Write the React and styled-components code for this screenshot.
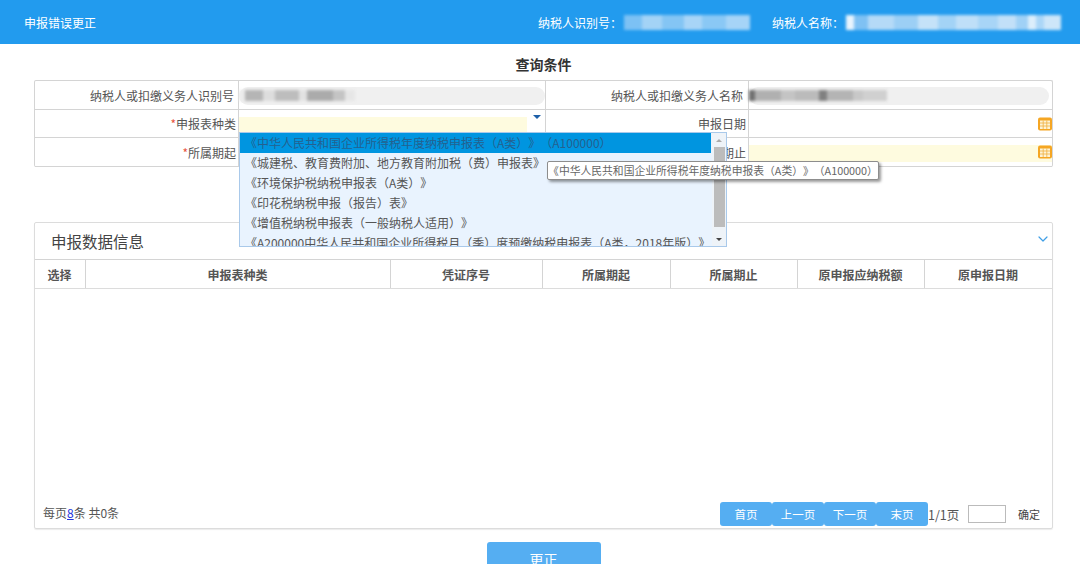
import styled, { createGlobalStyle } from "styled-components";
import { ChevronDown } from "lucide-react";

const GlobalStyle = createGlobalStyle`
  html, body {
    margin: 0;
    padding: 0;
    background: #fff;
    font-family: "Noto Sans CJK SC", "Liberation Sans", sans-serif;
    font-size: 12px;
    color: #555;
    text-spacing-trim: space-all;
  }
`;

const Page = styled.div`
  width: 1080px;
  height: 564px;
  overflow: hidden;
`;

const TopBar = styled.div`
  height: 44px;
  background: #229bee;
  color: #fff;
  display: flex;
  align-items: center;
  justify-content: space-between;
  padding: 0 19px 0 24px;
`;

const TopInfo = styled.div`
  display: flex;
  align-items: center;
`;

const TopLabel = styled.span`
  margin: 0 2px 0 ${(p) => p.$gap || 0}px;
  white-space: nowrap;
`;

const Blur = styled.div`
  display: flex;
  align-items: center;
  width: ${(p) => p.$w}px;
  height: ${(p) => p.$h}px;
  filter: blur(1.6px);
  flex-shrink: 0;
`;

const BlurBit = styled.i`
  display: block;
  height: 100%;
  width: ${(p) => p.$w}px;
  background: ${(p) => p.$c};
`;

const Content = styled.div`
  padding: 0 27px 0 34px;
`;

const SectionTitle = styled.div`
  height: 36px;
  line-height: 40px;
  text-align: center;
  font-size: 14px;
  font-weight: 700;
  color: #333;
`;

const FormWrap = styled.div`
  position: relative;
  height: 86px;
`;

const FormGrid = styled.div`
  display: grid;
  grid-template-columns: 204px 307px 203px 1fr;
  grid-template-rows: 29px 28px 29px;
  border: 1px solid #d4d4d4;
  border-bottom: none;
  box-sizing: border-box;
  height: 87px;
  border-radius: 2px;
`;

const LabelCell = styled.div`
  display: flex;
  align-items: center;
  justify-content: flex-end;
  padding-right: ${(p) => p.$pad || 2}px;
  border-bottom: 1px solid #d4d4d4;
  border-right: 1px solid #d4d4d4;
  white-space: nowrap;
`;

const ValueCell = styled.div`
  position: relative;
  display: flex;
  align-items: center;
  padding: 0 ${(p) => p.$padRight || 0}px 0 0;
  border-bottom: 1px solid #d4d4d4;
  border-right: ${(p) => (p.$last ? "none" : "1px solid #d4d4d4")};
`;

const Star = styled.span`
  color: #e8543f;
`;

const GreyPill = styled.div`
  flex: 1;
  height: 18px;
  background: #f0f0f0;
  border-radius: 9px;
  display: flex;
  align-items: center;
  margin-top: 1px;
`;

const YellowInput = styled.div`
  height: 17px;
  margin-top: 3px;
  flex: ${(p) => (p.$fill ? 1 : "none")};
  width: ${(p) => (p.$fill ? "auto" : "288px")};
  background: #fefbdf;
`;

const Caret = styled.span`
  position: absolute;
  right: 4px;
  top: 5px;
  border-left: 4px solid transparent;
  border-right: 4px solid transparent;
  border-top: 4px solid #1d5fa8;
`;

const CalendarSlot = styled.span`
  position: absolute;
  right: 0;
  top: 7px;
  display: flex;
`;

const Dropdown = styled.div`
  position: absolute;
  left: 205px;
  top: 52px;
  width: 488px;
  height: 115px;
  box-sizing: border-box;
  border: 1px solid #a9c9ea;
  background: #e9f3fe;
  overflow: hidden;
  z-index: 2;
  display: flex;
`;

const OptionList = styled.div`
  flex: 1;
  min-width: 0;
  padding-right: 1px;
`;

const Option = styled.div`
  height: 20px;
  line-height: 20px;
  padding-left: 5px;
  white-space: nowrap;
  background: ${(p) => (p.$active ? "#0095e0" : "transparent")};
  color: ${(p) => (p.$active ? "#24618f" : "#555")};
`;

const ScrollBar = styled.div`
  width: 14px;
  display: flex;
  flex-direction: column;
  align-items: center;
  background: #eef3f8;
`;

const ScrollArrow = styled.span`
  height: 14px;
  display: flex;
  align-items: center;
  justify-content: center;
  &::before {
    content: "";
    border-left: 3px solid transparent;
    border-right: 3px solid transparent;
    ${(p) => (p.$down ? "border-top: 3px solid #444;" : "border-bottom: 3px solid #aaa;")}
  }
`;

const ScrollThumb = styled.div`
  width: 11px;
  height: 80px;
  margin-bottom: auto;
  background: #bcbcbc;
`;

const Tip = styled.div`
  position: absolute;
  left: 513px;
  top: 81px;
  width: 332px;
  height: 19px;
  box-sizing: border-box;
  line-height: 17px;
  text-align: center;
  font-size: 10.8px;
  color: #666;
  background: #fff;
  border: 1px solid #8d8d8d;
  border-radius: 2px;
  box-shadow: 2px 2px 3px rgba(0, 0, 0, 0.4);
  white-space: nowrap;
  z-index: 3;
`;

const Panel = styled.div`
  margin-top: 56px;
  height: 307px;
  box-sizing: border-box;
  border: 1px solid #dcdcdc;
  border-radius: 2px;
  display: flex;
  flex-direction: column;
  box-shadow: 0 1px 1px rgba(0, 0, 0, 0.08);
`;

const PanelHead = styled.div`
  height: 37px;
  display: flex;
  align-items: center;
  justify-content: space-between;
  padding: 0 1px 0 16px;
  box-sizing: border-box;
  font-size: 15.5px;
  color: #444;
  border-bottom: 1px solid #d4d4d4;
  svg {
    margin-top: -4px;
  }
`;

const TableHead = styled.div`
  height: 29px;
  box-sizing: border-box;
  display: flex;
  border-bottom: 1px solid #dcdcdc;
`;

const HeadCell = styled.div`
  width: ${(p) => p.$w}px;
  flex-grow: ${(p) => (p.$grow ? 1 : 0)};
  flex-shrink: 0;
  box-sizing: border-box;
  display: flex;
  align-items: center;
  justify-content: center;
  padding-right: 1px;
  font-weight: 700;
  color: #555;
  border-right: ${(p) => (p.$grow ? "none" : "1px solid #d4d4d4")};
`;

const TableBody = styled.div`
  flex: 1;
`;

const PanelFoot = styled.div`
  height: 26px;
  margin-bottom: 1px;
  display: flex;
  align-items: center;
  justify-content: space-between;
  padding: 0 12px 0 8px;
`;

const PageSize = styled.span`
  color: #555;
  margin-top: -4px;
  a {
    color: #2233dd;
    text-decoration: underline;
  }
`;

const Pager = styled.div`
  display: flex;
  align-items: center;
`;

const PagerBtn = styled.button`
  width: 52px;
  height: 24px;
  border: none;
  padding: 0;
  border-radius: 3px;
  background: #55aef2;
  color: #fff;
  font: inherit;
  font-size: 11.5px;
`;

const PageCount = styled.span`
  margin: 0 8px 0 0;
  width: 32px;
  font-size: 12.5px;
  color: #555;
  white-space: nowrap;
`;

const PageInput = styled.div`
  width: 38px;
  height: 18px;
  box-sizing: border-box;
  border: 1px solid #bbb;
  margin-right: 12px;
`;

const Confirm = styled.span`
  font-size: 11px;
  color: #444;
  width: 22px;
  white-space: nowrap;
`;

const Actions = styled.div`
  display: flex;
  justify-content: center;
  margin-top: 13px;
`;

const SubmitBtn = styled.button`
  width: 114px;
  height: 34px;
  border: none;
  border-radius: 3px;
  background: #55aef2;
  color: #fff;
  font: inherit;
  font-size: 14px;
`;

const options = [
  "《中华人民共和国企业所得税年度纳税申报表（A类）》（A100000）",
  "《城建税、教育费附加、地方教育附加税（费）申报表》",
  "《环境保护税纳税申报表（A类）》",
  "《印花税纳税申报（报告）表》",
  "《增值税纳税申报表（一般纳税人适用）》",
  "《A200000中华人民共和国企业所得税月（季）度预缴纳税申报表（A类，2018年版）》",
];

const columns = [
  { title: "选择", w: 51 },
  { title: "申报表种类", w: 305 },
  { title: "凭证序号", w: 152 },
  { title: "所属期起", w: 128 },
  { title: "所属期止", w: 127 },
  { title: "原申报应纳税额", w: 127 },
  { title: "原申报日期", grow: true },
];

const taxIdBits = [
  [18, "#7cc1f4"], [20, "#a3d3f6"], [22, "#84c5f4"], [18, "#a8d5f7"], [24, "#8ac8f5"], [24, "#a6d4f7"],
];
const taxNameBits = [
  [8, "#e8f4fd"], [14, "#7fc1f3"], [26, "#b5daf7"], [24, "#9ccff5"], [20, "#c5e2f8"], [18, "#a3d3f6"],
  [22, "#bfdff8"], [20, "#a8d5f7"], [18, "#c2e0f8"], [12, "#a0d1f6"], [8, "#dceefb"], [8, "#abd6f7"], [17, "#cde6f9"],
];
const leftValueBits = [
  [6, "#ececec"], [18, "#b5b5b5"], [12, "#ddd"], [24, "#bdbdbd"], [8, "#e2e2e2"], [26, "#ababab"], [12, "#c4c4c4"], [10, "#e6e6e6"],
];
const rightValueBits = [
  [6, "#707070"], [26, "#b0b0b0"], [14, "#c4c4c4"], [24, "#bbb"], [8, "#808080"], [26, "#b4b4b4"], [10, "#c8c8c8"], [24, "#d0d0d0"],
];

const Redacted = ({ bits, height }) => (
  <Blur $w={bits.reduce((sum, b) => sum + b[0], 0)} $h={height}>
    {bits.map(([w, c], i) => (
      <BlurBit key={i} $w={w} $c={c} />
    ))}
  </Blur>
);

const CalendarIcon = () => (
  <svg width="14" height="14" viewBox="0 0 14 14">
    <rect x="0" y="0.5" width="14" height="13" rx="2" fill="#f5a623" />
    <rect x="2" y="3.5" width="10" height="8.5" fill="#fdf3d6" />
    <path d="M2 6h10M2 9h10M5.2 3.5v8.5M8.8 3.5v8.5" stroke="#f0b040" strokeWidth="0.8" />
  </svg>
);

export default function App() {
  return (
    <Page>
      <GlobalStyle />
      <TopBar>
        <span>申报错误更正</span>
        <TopInfo>
          <TopLabel>纳税人识别号：</TopLabel>
          <Redacted bits={taxIdBits} height={15} />
          <TopLabel $gap={22}>纳税人名称：</TopLabel>
          <Redacted bits={taxNameBits} height={15} />
        </TopInfo>
      </TopBar>
      <Content>
        <SectionTitle>查询条件</SectionTitle>
        <FormWrap>
          <FormGrid>
            <LabelCell $pad={4}>纳税人或扣缴义务人识别号</LabelCell>
            <ValueCell>
              <GreyPill>
                <Redacted bits={leftValueBits} height={11} />
              </GreyPill>
            </ValueCell>
            <LabelCell $pad={5}>纳税人或扣缴义务人名称</LabelCell>
            <ValueCell $last $padRight={3}>
              <GreyPill>
                <Redacted bits={rightValueBits} height={11} />
              </GreyPill>
            </ValueCell>

            <LabelCell>
              <span><Star>*</Star>申报表种类</span>
            </LabelCell>
            <ValueCell>
              <YellowInput />
              <Caret />
            </ValueCell>
            <LabelCell>申报日期</LabelCell>
            <ValueCell $last>
              <CalendarSlot>
                <CalendarIcon />
              </CalendarSlot>
            </ValueCell>

            <LabelCell>
              <span><Star>*</Star>所属期起</span>
            </LabelCell>
            <ValueCell />
            <LabelCell>所属期止</LabelCell>
            <ValueCell $last>
              <YellowInput $fill />
              <CalendarSlot>
                <CalendarIcon />
              </CalendarSlot>
            </ValueCell>
          </FormGrid>
          <Dropdown>
            <OptionList>
              {options.map((text, i) => (
                <Option key={text} $active={i === 0}>
                  {text}
                </Option>
              ))}
            </OptionList>
            <ScrollBar>
              <ScrollArrow />
              <ScrollThumb />
              <ScrollArrow $down />
            </ScrollBar>
          </Dropdown>
          <Tip>{options[0]}</Tip>
        </FormWrap>

        <Panel>
          <PanelHead>
            申报数据信息
            <ChevronDown size={16} color="#3f9fe6" strokeWidth={1.8} />
          </PanelHead>
          <TableHead>
            {columns.map((col) => (
              <HeadCell key={col.title} $w={col.w} $grow={col.grow}>
                {col.title}
              </HeadCell>
            ))}
          </TableHead>
          <TableBody />
          <PanelFoot>
            <PageSize>
              每页<a>8</a>条 共0条
            </PageSize>
            <Pager>
              <PagerBtn>首页</PagerBtn>
              <PagerBtn>上一页</PagerBtn>
              <PagerBtn>下一页</PagerBtn>
              <PagerBtn>末页</PagerBtn>
              <PageCount>1/1页</PageCount>
              <PageInput />
              <Confirm>确定</Confirm>
            </Pager>
          </PanelFoot>
        </Panel>
        <Actions>
          <SubmitBtn>更正</SubmitBtn>
        </Actions>
      </Content>
    </Page>
  );
}
